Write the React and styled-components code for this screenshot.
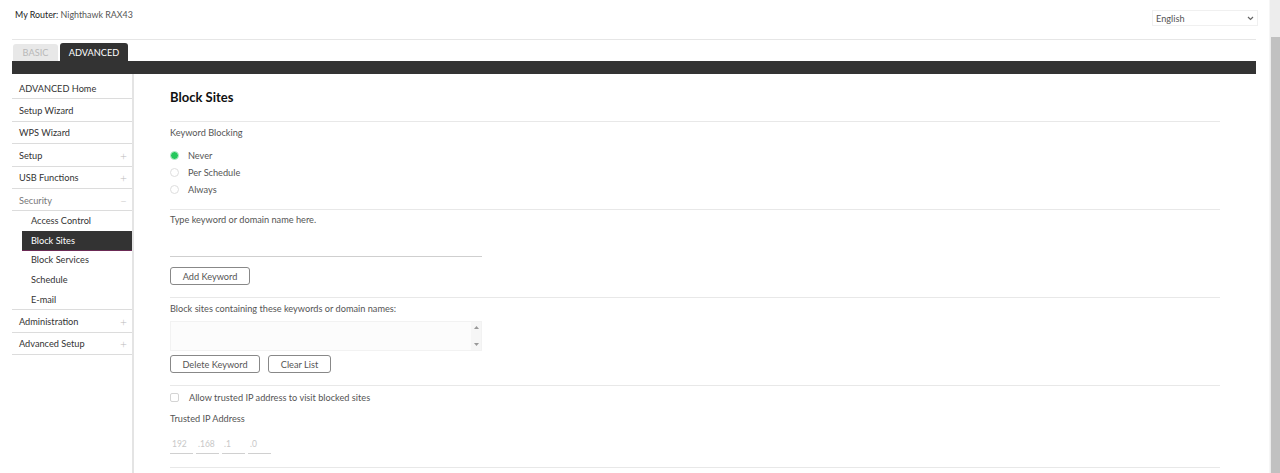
import React from "react";
import styled, { createGlobalStyle } from "styled-components";

const GlobalStyle = createGlobalStyle`
  html, body { margin: 0; padding: 0; background: #fff; overflow: hidden; }
  body { font-family: Lato, "Open Sans", "Liberation Sans", sans-serif; color: #333; }
  * { box-sizing: border-box; }
`;

const Page = styled.div`
  width: 1269px;
  padding: 0 13px 0 12px;
  height: 473px;
  display: flex;
  flex-direction: column;
`;

const Header = styled.header`
  height: 40px;
  display: flex;
  justify-content: space-between;
  align-items: flex-start;
  border-bottom: 1px solid #e6e6e6;
  padding: 8px 0 0 3px;
`;

const RouterName = styled.div`
  font-size: 8.9px;
  line-height: 13px;
  color: #222;
  span { color: #555; }
`;

const LangSelect = styled.div`
  width: 106px;
  height: 16px;
  margin: 2px -2px 0 0;
  border: 1px solid #f0f0f0;
  display: flex;
  align-items: center;
  justify-content: space-between;
  padding: 0 3px;
  font-size: 9.2px;
  color: #555;
`;

const Tabs = styled.div`
  display: flex;
  align-items: flex-end;
  gap: 2px;
  padding: 3px 0 0 1px;
  height: 21px;
`;

const Tab = styled.div`
  height: ${(p) => (p.$active ? "18px" : "17px")};
  width: ${(p) => (p.$active ? "68px" : "45px")};
  justify-content: center;
  border-radius: 3px 3px 0 0;
  background: ${(p) => (p.$active ? "#333" : "#e8e8e8")};
  color: ${(p) => (p.$active ? "#fff" : "#b8b8b8")};
  font-size: 9.2px;
  display: flex;
  align-items: center;
`;

const DarkBar = styled.div`
  height: 13px;
  background: #333;
`;

const Body = styled.div`
  flex: 1;
  display: flex;
`;

const Sidebar = styled.nav`
  width: 122px;
  border-right: 2px solid #e4e4e4;
  padding-top: 3px;
  display: flex;
  flex-direction: column;
`;

const NavItem = styled.div`
  height: 22.4px;
  border-bottom: 1px solid #dcdcdc;
  display: flex;
  align-items: center;
  justify-content: space-between;
  padding: 1px 5px 0 7px;
  font-size: 9.2px;
  color: ${(p) => (p.$muted ? "#777" : "#333")};
`;

const Sign = styled.span`
  color: #bbb;
  font-size: 12px;
  font-weight: 300;
`;

const SubGroup = styled.div`
  border-bottom: 1px solid #dcdcdc;
  display: flex;
  flex-direction: column;
`;

const SubItem = styled.div`
  height: 19.6px;
  margin-left: 10px;
  padding-left: 9px;
  display: flex;
  align-items: center;
  font-size: 9.2px;
  color: ${(p) => (p.$active ? "#fff" : "#333")};
  background: ${(p) => (p.$active ? "#333" : "transparent")};
  border-bottom: 1px solid ${(p) => (p.$active ? "#6b2a55" : "transparent")};
`;

const Main = styled.main`
  flex: 1;
  padding: 0 36px;
  display: flex;
  flex-direction: column;
`;

const TitleBlock = styled.div`
  height: 48px;
  border-bottom: 1px solid #e8e8e8;
  padding-top: 15px;
`;

const Title = styled.h1`
  margin: 0;
  font-size: 13px;
  line-height: 16px;
  font-weight: 700;
  color: #111;
`;

const Section = styled.section`
  height: ${(p) => p.$h}px;
  border-bottom: 1px solid #e8e8e8;
  padding-top: ${(p) => p.$pt}px;
  display: flex;
  flex-direction: column;
  align-items: flex-start;
`;

const Label = styled.div`
  font-size: 9.2px;
  line-height: 14px;
  color: #555;
  margin-top: ${(p) => p.$mt || 0}px;
`;

const RadioList = styled.div`
  margin-top: 7px;
  display: flex;
  flex-direction: column;
`;

const RadioRow = styled.label`
  height: 17px;
  display: flex;
  align-items: center;
  gap: 9px;
  padding-left: 0;
  font-size: 9.2px;
  color: #555;
`;

const RadioDot = styled.span`
  width: 9px;
  height: 9px;
  border-radius: 50%;
  border: 1px solid ${(p) => (p.$on ? "#bdeccd" : "#dedede")};
  background: ${(p) => (p.$on ? "#25c85c" : "#fff")};
`;

const Underline = styled.div`
  width: 312px;
  height: 26px;
  border-bottom: 1px solid #cfcfcf;
  margin-top: 4px;
`;

const Button = styled.button`
  height: 18px;
  width: ${(p) => p.$w}px;
  border: 1px solid #888;
  border-radius: 3px;
  background: #fff;
  color: #555;
  font-family: inherit;
  font-size: 9.2px;
  padding: 0;
  margin-top: ${(p) => p.$mt || 0}px;
`;

const ButtonRow = styled.div`
  display: flex;
  gap: 8px;
  margin-top: 4px;
`;

const ListBox = styled.div`
  width: 312px;
  height: 30px;
  margin-top: 5px;
  background: #fcfcfc;
  border: 1px solid #f2f2f2;
  display: flex;
  justify-content: flex-end;
`;

const ListScroll = styled.div`
  width: 10px;
  display: flex;
  flex-direction: column;
  justify-content: space-between;
  align-items: center;
  padding: 4px 0;
  background: #f6f6f6;
`;

const CheckRow = styled.label`
  height: 14px;
  display: flex;
  align-items: center;
  gap: 10px;
  padding-left: 0;
  font-size: 9.2px;
  color: #555;
`;

const CheckBox = styled.span`
  width: 9px;
  height: 9px;
  border: 1px solid #d4d4d4;
  border-radius: 2px;
`;

const IpRow = styled.div`
  display: flex;
  gap: 3px;
  margin-top: 11px;
`;

const IpField = styled.div`
  width: 23px;
  height: 17px;
  border-bottom: 1px solid #d0d0d0;
  font-size: 8.5px;
  color: #c8c8c8;
  padding: 2px 0 0 2px;
`;

const ScrollTrack = styled.div`
  position: fixed;
  top: 0;
  right: 0;
  width: 11px;
  height: 100%;
  background: #ededed;
  border-left: 1px solid #f6f6f6;
`;

const ScrollThumb = styled.div`
  position: absolute;
  top: 37px;
  left: 1px;
  right: 0;
  bottom: 0;
  background: #c1c1c1;
`;

const Arrow = ({ up }) => (
  <svg width="5" height="3" viewBox="0 0 5 3">
    <path d={up ? "M0 3 L2.5 0 L5 3 Z" : "M0 0 L2.5 3 L5 0 Z"} fill="#999" />
  </svg>
);

export default function App() {
  return (
    <>
      <GlobalStyle />
      <Page>
        <Header>
          <RouterName>
            My Router: <span>Nighthawk RAX43</span>
          </RouterName>
          <LangSelect>
            English
            <svg width="7" height="5" viewBox="0 0 7 5">
              <path d="M1 1 L3.5 3.5 L6 1" stroke="#666" strokeWidth="1.2" fill="none" />
            </svg>
          </LangSelect>
        </Header>
        <Tabs>
          <Tab>BASIC</Tab>
          <Tab $active>ADVANCED</Tab>
        </Tabs>
        <DarkBar />
        <Body>
          <Sidebar>
            <NavItem>ADVANCED Home</NavItem>
            <NavItem>Setup Wizard</NavItem>
            <NavItem>WPS Wizard</NavItem>
            <NavItem>Setup<Sign>+</Sign></NavItem>
            <NavItem>USB Functions<Sign>+</Sign></NavItem>
            <NavItem $muted>Security<Sign>–</Sign></NavItem>
            <SubGroup>
              <SubItem>Access Control</SubItem>
              <SubItem $active>Block Sites</SubItem>
              <SubItem>Block Services</SubItem>
              <SubItem>Schedule</SubItem>
              <SubItem>E-mail</SubItem>
            </SubGroup>
            <NavItem>Administration<Sign>+</Sign></NavItem>
            <NavItem>Advanced Setup<Sign>+</Sign></NavItem>
          </Sidebar>
          <Main>
            <TitleBlock>
              <Title>Block Sites</Title>
            </TitleBlock>
            <Section $h={88} $pt={4}>
              <Label>Keyword Blocking</Label>
              <RadioList>
                <RadioRow><RadioDot $on />Never</RadioRow>
                <RadioRow><RadioDot />Per Schedule</RadioRow>
                <RadioRow><RadioDot />Always</RadioRow>
              </RadioList>
            </Section>
            <Section $h={88} $pt={3}>
              <Label>Type keyword or domain name here.</Label>
              <Underline />
              <Button $w={80} $mt={10}>Add Keyword</Button>
            </Section>
            <Section $h={88} $pt={4}>
              <Label>Block sites containing these keywords or domain names:</Label>
              <ListBox>
                <ListScroll>
                  <Arrow up />
                  <Arrow />
                </ListScroll>
              </ListBox>
              <ButtonRow>
                <Button $w={90}>Delete Keyword</Button>
                <Button $w={63}>Clear List</Button>
              </ButtonRow>
            </Section>
            <Section $h={82} $pt={4}>
              <CheckRow><CheckBox />Allow trusted IP address to visit blocked sites</CheckRow>
              <Label $mt={8}>Trusted IP Address</Label>
              <IpRow>
                <IpField>192</IpField>
                <IpField>.168</IpField>
                <IpField>.1</IpField>
                <IpField>.0</IpField>
              </IpRow>
            </Section>
          </Main>
        </Body>
      </Page>
      <ScrollTrack>
        <ScrollThumb />
      </ScrollTrack>
    </>
  );
}
